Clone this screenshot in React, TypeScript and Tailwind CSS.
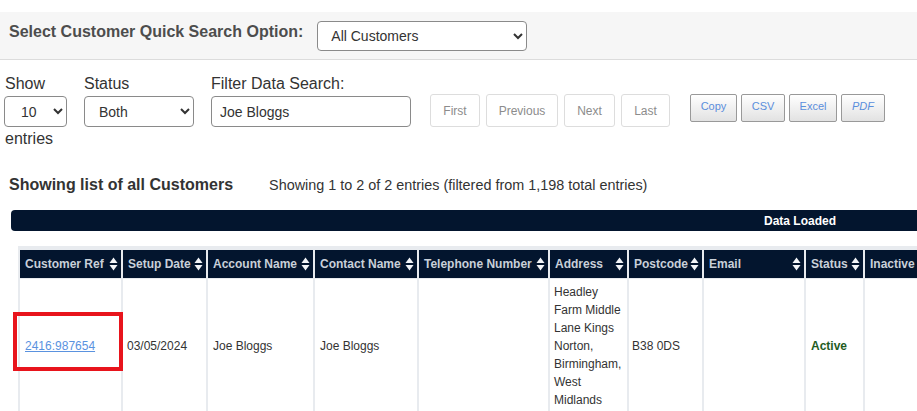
import { useState } from 'react';

const columns = [
  { label: 'Customer Ref', width: 101 },
  { label: 'Setup Date', width: 83 },
  { label: 'Account Name', width: 105 },
  { label: 'Contact Name', width: 102 },
  { label: 'Telephone Number', width: 129 },
  { label: 'Address', width: 77 },
  { label: 'Postcode', width: 73 },
  { label: 'Email', width: 100 },
  { label: 'Status', width: 57 },
  { label: 'Inactive', width: 90, noSort: true },
];

function SortIcon() {
  return (
    <svg width="9" height="14" viewBox="0 0 9 14" className="shrink-0">
      <path d="M4.5 0.5 L8.5 6 L0.5 6 Z" fill="#f2f4f7" />
      <path d="M4.5 13.5 L8.5 8 L0.5 8 Z" fill="#f2f4f7" />
    </svg>
  );
}

export default function App() {
  const [quick, setQuick] = useState('All Customers');
  const [show, setShow] = useState('10');
  const [status, setStatus] = useState('Both');
  const [search, setSearch] = useState('Joe Bloggs');

  return (
    <div className="relative w-[917px] h-[411px] overflow-hidden bg-white text-[#333] font-['Liberation_Sans',Arial,sans-serif]">
      <div className="h-3" />
      <div className="h-[48px] bg-[#f6f6f6] border-b border-[#dcdcdc] flex items-center pl-[9px]">
        <span className="text-[16px] font-bold text-[#4d4d4d] mt-[-8px]">Select Customer Quick Search Option:</span>
        <select
          value={quick}
          onChange={(e) => setQuick(e.target.value)}
          className="ml-[14px] w-[210px] h-[30px] border border-[#8a8a8a] rounded-[4px] bg-white pl-[9px] text-[14px] text-[#333]"
        >
          <option>All Customers</option>
          <option>Active Customers</option>
        </select>
      </div>

      <div className="flex mt-[15px] pl-[4px]">
        <div className="w-[63px] text-[16px]">
          <div className="leading-[18px] pl-[1px]">Show</div>
          <select
            value={show}
            onChange={(e) => setShow(e.target.value)}
            className="mt-[3px] w-[63px] h-[31px] border border-[#8a8a8a] rounded-[4px] bg-white pl-[12px] text-[14px]"
          >
            <option>10</option>
            <option>25</option>
            <option>50</option>
          </select>
          <div className="leading-[18px] mt-[3px] pl-[1px]">entries</div>
        </div>
        <div className="ml-[17px] text-[16px]">
          <div className="leading-[18px]">Status</div>
          <select
            value={status}
            onChange={(e) => setStatus(e.target.value)}
            className="mt-[3px] w-[110px] h-[31px] border border-[#8a8a8a] rounded-[4px] bg-white pl-[10px] text-[14px]"
          >
            <option>Both</option>
            <option>Active</option>
            <option>Inactive</option>
          </select>
        </div>
        <div className="ml-[17px] text-[16px]">
          <div className="leading-[18px]">Filter Data Search:</div>
          <input
            value={search}
            onChange={(e) => setSearch(e.target.value)}
            className="mt-[3px] w-[200px] h-[31px] border border-[#8a8a8a] rounded-[4px] bg-white px-[8px] text-[14px] outline-none"
          />
        </div>
        <div className="ml-[19px] mt-[19px] flex gap-[6px] text-[12px] text-[#8c8c8c]">
          <button className="w-[50px] h-[33px] border border-[#dddddd] rounded-[3px] bg-white">First</button>
          <button className="w-[72px] h-[33px] border border-[#dddddd] rounded-[3px] bg-white">Previous</button>
          <button className="w-[51px] h-[33px] border border-[#dddddd] rounded-[3px] bg-white">Next</button>
          <button className="w-[49px] h-[33px] border border-[#dddddd] rounded-[3px] bg-white">Last</button>
        </div>
        <div className="ml-[20px] mt-[19px] flex gap-[4px] text-[11px] text-[#5b8edc]">
          <button className="w-[47px] h-[28px] pb-[3px] border border-[#999] rounded-[2px] bg-gradient-to-b from-white to-[#e2e2e2]">Copy</button>
          <button className="w-[44px] h-[28px] pb-[3px] border border-[#999] rounded-[2px] bg-gradient-to-b from-white to-[#e2e2e2]">CSV</button>
          <button className="w-[48px] h-[28px] pb-[3px] border border-[#999] rounded-[2px] bg-gradient-to-b from-white to-[#e2e2e2]">Excel</button>
          <button className="w-[44px] h-[28px] pb-[3px] border border-[#999] rounded-[2px] bg-gradient-to-b from-white to-[#e2e2e2] italic">PDF</button>
        </div>
      </div>

      <div className="flex items-center mt-[28px] pl-[9px]">
        <span className="text-[16px] font-bold leading-[18px] text-[#333]">Showing list of all Customers</span>
        <span className="ml-[36px] text-[14.4px] leading-[18px] text-[#333]">
          Showing 1 to 2 of 2 entries (filtered from 1,198 total entries)
        </span>
      </div>

      <div className="mt-[16px] ml-[11px] w-[1578px] h-[21px] bg-[#03152e] rounded-l-[4px] flex items-center justify-center">
        <span className="text-white text-[12px] font-bold">Data Loaded</span>
      </div>

      <div className="mt-[15px] ml-[18px] w-[1100px] bg-[#e8ebef] pt-[3px]">
        <table className="w-[939px] table-fixed border-separate border-spacing-x-[2px] border-spacing-y-[1px]">
          <colgroup>
            {columns.map((c) => (
              <col key={c.label} style={{ width: c.width }} />
            ))}
          </colgroup>
          <thead>
            <tr>
              {columns.map((c) => (
                <th key={c.label} className="h-[28px] bg-[#03152e] p-0 text-left overflow-hidden">
                  <div className="flex items-center justify-between pl-[5px] pr-[3px] gap-[2px] text-[12px] font-bold text-[#c9d0d9] whitespace-nowrap">
                    <span>{c.label}</span>
                    {!c.noSort && <SortIcon />}
                  </div>
                </th>
              ))}
            </tr>
          </thead>
          <tbody>
            <tr className="text-[12px] leading-[18px] text-[#333]">
              <td className="bg-white px-[5px] py-[4px] align-middle">
                <a href="#" className="text-[#5a92df] underline">2416:987654</a>
              </td>
              <td className="bg-white px-[4px] py-[4px] align-middle">03/05/2024</td>
              <td className="bg-white px-[5px] py-[4px] align-middle">Joe Bloggs</td>
              <td className="bg-white px-[5px] py-[4px] align-middle">Joe Bloggs</td>
              <td className="bg-white px-[5px] py-[4px] align-middle"></td>
              <td className="bg-white px-[4px] py-[4px] align-middle">
                Headley Farm Middle Lane Kings Norton, Birmingham, West Midlands
              </td>
              <td className="bg-white px-[3px] py-[4px] align-middle">B38 0DS</td>
              <td className="bg-white px-[5px] py-[4px] align-middle"></td>
              <td className="bg-white px-[5px] py-[4px] align-middle font-bold text-[#1f5c1f]">Active</td>
              <td className="bg-white px-[5px] py-[4px] align-middle"></td>
            </tr>
          </tbody>
        </table>
      </div>

      <div className="absolute left-[13px] top-[312px] w-[110px] h-[59px] border-4 border-[#e8141c] pointer-events-none" />
    </div>
  );
}
